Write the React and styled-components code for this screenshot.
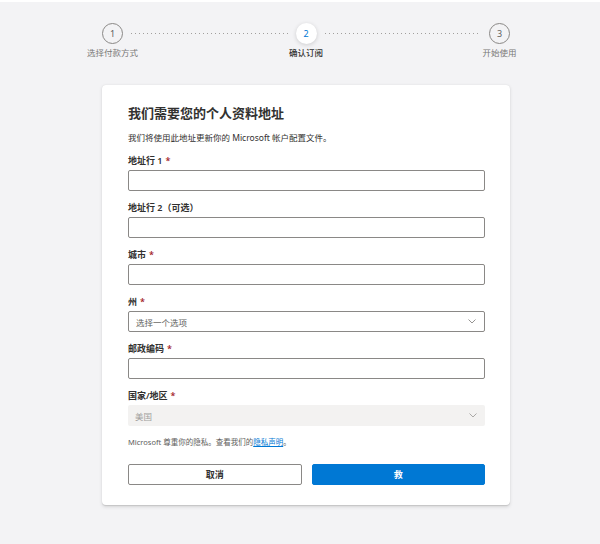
import React from "react";
import styled, { createGlobalStyle } from "styled-components";

const GlobalStyle = createGlobalStyle`
  html, body {
    margin: 0;
    padding: 0;
    background: #f3f3f5;
  }
  body {
    font-family: "Noto Sans", "Noto Sans CJK SC", sans-serif;
    color: #323130;
  }
  * {
    box-sizing: border-box;
  }
`;

// 상단 흰 띠
const TopBar = styled.div`
  height: 2px;
  background: #ffffff;
`;

const Page = styled.div`
  display: flex;
  justify-content: center;
  padding: 0 0 40px 12px;
  min-height: 542px;
`;

const Column = styled.div`
  width: 408px;
  display: flex;
  flex-direction: column;
`;

// 단계 표시
const Stepper = styled.div`
  display: flex;
  align-items: flex-start;
  padding-top: 21px;
  height: 83px;
`;

const Step = styled.div`
  width: 21px;
  display: flex;
  flex-direction: column;
  align-items: center;
`;

const Circle = styled.div`
  width: 21px;
  height: 21px;
  border-radius: 50%;
  display: flex;
  align-items: center;
  justify-content: center;
  font-size: 9px;
  background: ${(p) => (p.$active ? "#ffffff" : "transparent")};
  border: ${(p) => (p.$active ? "none" : "1px solid #8a8886")};
  box-shadow: ${(p) =>
    p.$active ? "0 1px 4px rgba(0, 0, 0, 0.16)" : "none"};
  color: ${(p) => (p.$active ? "#0078d4" : "#605e5c")};
`;

const StepLabel = styled.div`
  margin-top: 3px;
  white-space: nowrap;
  font-size: 8.5px;
  line-height: 12px;
  font-weight: ${(p) => (p.$active ? 500 : 400)};
  color: ${(p) => (p.$active ? "#323130" : "#797775")};
`;

const Dots = styled.div`
  flex: 1;
  height: 1px;
  margin: 10px 8px 0;
  background-image: linear-gradient(to right, #a19f9d 1px, transparent 1px);
  background-size: 4px 1px;
`;

// 카드
const Card = styled.div`
  background: #ffffff;
  border-radius: 4px;
  box-shadow: 0 1.6px 3.6px rgba(0, 0, 0, 0.12), 0 0.3px 0.9px rgba(0, 0, 0, 0.1);
  padding: 20px 25px 20px 26px;
  display: flex;
  flex-direction: column;
`;

const Title = styled.h1`
  margin: 0;
  font-size: 13px;
  line-height: 16px;
  font-weight: 700;
  color: #323130;
`;

const Subtitle = styled.p`
  margin: 11px 0 0;
  font-size: 8.5px;
  line-height: 12px;
  color: #323130;
`;

const Fields = styled.div`
  display: flex;
  flex-direction: column;
  gap: 10px;
  margin-top: 10px;
`;

const Field = styled.div`
  display: flex;
  flex-direction: column;
`;

const Label = styled.label`
  font-size: 9px;
  line-height: 14px;
  font-weight: 600;
  color: #323130;
  margin-bottom: 2px;
`;

const Req = styled.span`
  color: #a4262c;
  margin-left: 3px;
`;

const Input = styled.input`
  height: 21px;
  width: 100%;
  border: 1px solid #8a8886;
  border-radius: 2px;
  background: #ffffff;
  font: inherit;
  font-size: 8.5px;
  padding: 0 7px;
  outline: none;
`;

const SelectBox = styled.div`
  height: 21px;
  display: flex;
  align-items: center;
  justify-content: space-between;
  padding: 0 8px 0 7px;
  border-radius: 2px;
  font-size: 8.5px;
  border: ${(p) => (p.$disabled ? "none" : "1px solid #8a8886")};
  background: ${(p) => (p.$disabled ? "#f3f2f1" : "#ffffff")};
  color: ${(p) => (p.$disabled ? "#a19f9d" : "#605e5c")};
`;

const Privacy = styled.p`
  margin: 10px 0 0;
  font-size: 7.5px;
  line-height: 12px;
  color: #605e5c;
`;

const Link = styled.a`
  color: #0078d4;
  text-decoration: underline;
`;

const Buttons = styled.div`
  display: grid;
  grid-template-columns: 1fr 1fr;
  gap: 10px;
  margin-top: 16px;
`;

const Button = styled.button`
  height: 21px;
  border-radius: 2px;
  font: inherit;
  font-size: 9px;
  font-weight: 700;
  cursor: pointer;
  border: 1px solid ${(p) => (p.$primary ? "#0078d4" : "#8a8886")};
  background: ${(p) => (p.$primary ? "#0078d4" : "#ffffff")};
  color: ${(p) => (p.$primary ? "#ffffff" : "#323130")};
`;

const Chevron = ({ color }) => (
  <svg width="8" height="5" viewBox="0 0 8 5">
    <path d="M0.5 0.5 L4 4 L7.5 0.5" fill="none" stroke={color} strokeWidth="0.9" />
  </svg>
);

const steps = [
  { n: 1, label: "选择付款方式" },
  { n: 2, label: "确认订阅", active: true },
  { n: 3, label: "开始使用" },
];

const textFields = [
  { label: "地址行 1", required: true },
  { label: "地址行 2（可选）" },
  { label: "城市", required: true },
];

const App = () => {
  return (
    <>
      <GlobalStyle />
      <TopBar />
      <Page>
        <Column>
          <Stepper>
            {steps.map((s, i) => (
              <React.Fragment key={s.n}>
                {i > 0 && <Dots />}
                <Step>
                  <Circle $active={s.active}>{s.n}</Circle>
                  <StepLabel $active={s.active}>{s.label}</StepLabel>
                </Step>
              </React.Fragment>
            ))}
          </Stepper>

          <Card>
            <Title>我们需要您的个人资料地址</Title>
            <Subtitle>我们将使用此地址更新你的 Microsoft 帐户配置文件。</Subtitle>

            <Fields>
              {textFields.map((f) => (
                <Field key={f.label}>
                  <Label>
                    {f.label}
                    {f.required && <Req>*</Req>}
                  </Label>
                  <Input />
                </Field>
              ))}
              <Field>
                <Label>
                  州<Req>*</Req>
                </Label>
                <SelectBox>
                  <span>选择一个选项</span>
                  <Chevron color="#8a8886" />
                </SelectBox>
              </Field>
              <Field>
                <Label>
                  邮政编码<Req>*</Req>
                </Label>
                <Input />
              </Field>
              <Field>
                <Label>
                  国家/地区<Req>*</Req>
                </Label>
                <SelectBox $disabled>
                  <span>美国</span>
                  <Chevron color="#a19f9d" />
                </SelectBox>
              </Field>
            </Fields>

            <Privacy>
              Microsoft 尊重你的隐私。查看我们的<Link href="#">隐私声明</Link>。
            </Privacy>

            <Buttons>
              <Button>取消</Button>
              <Button $primary>救</Button>
            </Buttons>
          </Card>
        </Column>
      </Page>
    </>
  );
};

export default App;
